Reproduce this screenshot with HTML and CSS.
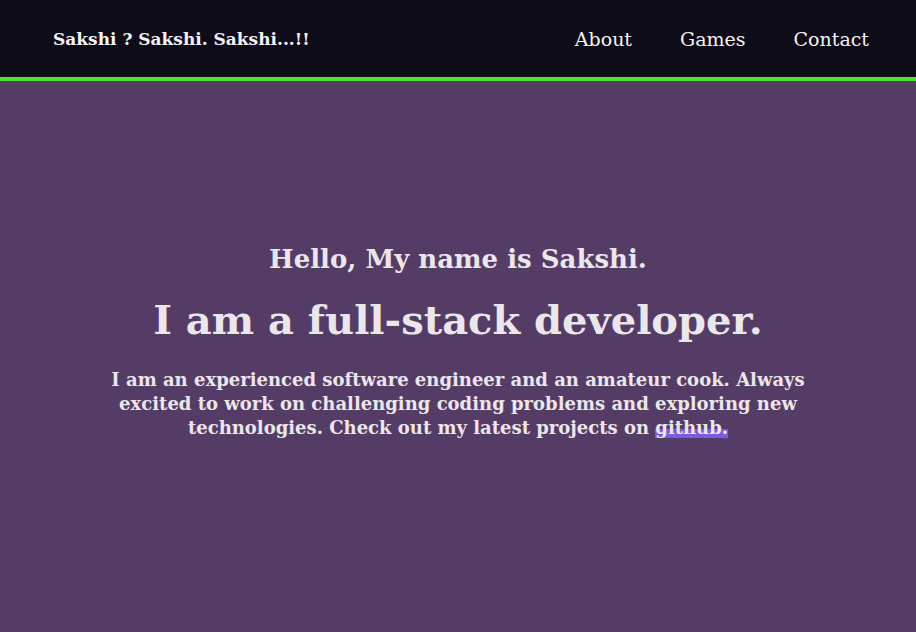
FILE: index.html
```html
<!DOCTYPE html>
<html>
<head>
<meta charset="utf-8">
<link rel="stylesheet" href="styles.css">
</head>
<body>
<header class="header">
  <div class="logo">Sakshi ? Sakshi. Sakshi...!!</div>
  <nav class="nav">
    <a class="nav-link" href="#">About</a>
    <a class="nav-link" href="#">Games</a>
    <a class="nav-link" href="#">Contact</a>
  </nav>
</header>
<main class="hero">
  <div class="hero-inner">
    <h2 class="hello">Hello, My name is Sakshi.</h2>
    <h1 class="title">I am a full-stack developer.</h1>
    <p class="intro">I am an experienced software engineer and an amateur cook. Always excited to work on challenging coding problems and exploring new technologies. Check out my latest projects on <a class="gh" href="#">github.</a></p>
  </div>
</main>
</body>
</html>
```
FILE: styles.css
```css
* { box-sizing: border-box; }
html, body { margin: 0; padding: 0; height: 100%; }
body {
  background: #553c67;
  font-family: "DejaVu Serif", "Liberation Serif", serif;
  color: #ebe6ea;
  display: flex;
  flex-direction: column;
}
.header {
  height: 81px;
  background: #0f0c19;
  border-bottom: 4px solid #5ade36;
  display: flex;
  align-items: center;
  justify-content: space-between;
  padding: 0 47px 0 53px;
}
.logo {
  font-weight: bold;
  font-size: 17px;
  color: #f4f2f4;
}
.nav { display: flex; gap: 48px; }
.nav-link {
  color: #f4f2f4;
  text-decoration: none;
  font-size: 19px;
}
.hero {
  flex: 1;
  display: flex;
  align-items: center;
  justify-content: center;
  padding-bottom: 30px;
}
.hero-inner {
  width: 720px;
  text-align: center;
}
.hello {
  margin: 0 0 22px;
  font-size: 26px;
  font-weight: bold;
}
.title {
  margin: 0 0 25px;
  font-size: 40px;
  font-weight: bold;
}
.intro {
  margin: 0;
  font-size: 18px;
  font-weight: bold;
  line-height: 24px;
}
.gh {
  color: inherit;
  text-decoration: none;
  background: linear-gradient(transparent 55%, #7b5ce0 55%);
}
```
